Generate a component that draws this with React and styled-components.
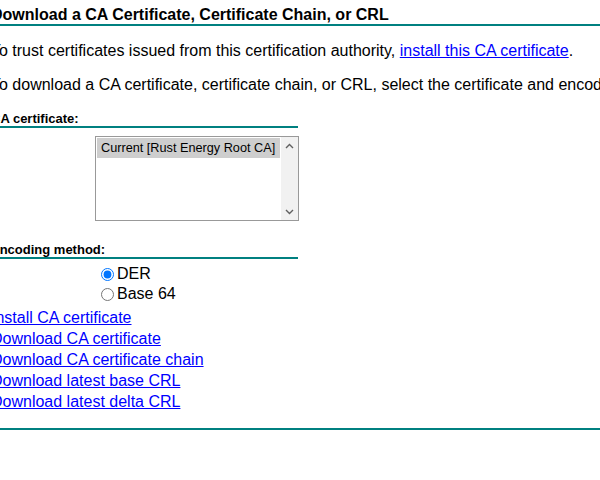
import React from "react";
import styled, { createGlobalStyle } from "styled-components";

const GlobalStyle = createGlobalStyle`
  html, body {
    margin: 0;
    padding: 0;
    background: #ffffff;
    overflow: hidden;
  }
  body {
    font-family: "Liberation Sans", Arial, sans-serif;
    color: #000000;
  }
`;

const Page = styled.div`
  margin-left: -9px;
  width: 820px;
  padding-top: 6px;
`;

const Title = styled.div`
  font-size: 16px;
  font-weight: bold;
  line-height: 18px;
`;

const Rule = styled.div`
  height: 2px;
  background: #008080;
  margin-top: ${(p) => p.$top || 0}px;
`;

const Para = styled.p`
  margin: 16px 0 0;
  font-size: 16px;
  line-height: 18px;
  white-space: nowrap;
`;

const Link = styled.a`
  color: #0000ff;
  text-decoration: underline;
  cursor: pointer;
`;

const FormBlock = styled.div`
  width: 307px;
  margin-top: 18px;
`;

const Label = styled.div`
  font-size: 13px;
  font-weight: bold;
  line-height: 14px;
  margin-top: ${(p) => p.$top || 0}px;
`;

const Field = styled.div`
  padding-left: 104px;
  margin-top: ${(p) => p.$top || 0}px;
`;

const Listbox = styled.div`
  box-sizing: border-box;
  width: 204px;
  height: 85px;
  border: 1px solid #999999;
  display: flex;
  background: #ffffff;
`;

const OptionList = styled.div`
  flex: 1;
  padding: 1px;
`;

const Option = styled.div`
  height: 20px;
  line-height: 20px;
  padding-left: 4px;
  font-size: 12.7px;
  white-space: nowrap;
  background: ${(p) => (p.$selected ? "#cecece" : "transparent")};
`;

const Scrollbar = styled.div`
  width: 17px;
  background: #f1f1f1;
  display: flex;
  flex-direction: column;
  justify-content: space-between;
`;

const ScrollButton = styled.div`
  height: 17px;
  display: flex;
  align-items: center;
  justify-content: center;
`;

const RadioRow = styled.label`
  display: flex;
  align-items: center;
  height: 20px;
  font-size: 16px;
  line-height: 18px;
`;

const Radio = styled.input`
  width: 13px;
  height: 13px;
  margin: 0 3px 0 6px;
`;

const LinkList = styled.div`
  margin-top: 3px;
`;

const LinkRow = styled.div`
  font-size: 16px;
  line-height: 21px;
  white-space: nowrap;
`;

const Chevron = ({ up }) => (
  <svg width="9" height="6" viewBox="0 0 9 6">
    <polyline
      points={up ? "1,5 4.5,1.5 8,5" : "1,1 4.5,4.5 8,1"}
      fill="none"
      stroke="#606060"
      strokeWidth="1.4"
    />
  </svg>
);

const links = [
  "Install CA certificate",
  "Download CA certificate",
  "Download CA certificate chain",
  "Download latest base CRL",
  "Download latest delta CRL",
];

export default function App() {
  return (
    <>
      <GlobalStyle />
      <Page>
        <Title>Download a CA Certificate, Certificate Chain, or CRL</Title>
        <Rule />
        <Para>
          To trust certificates issued from this certification authority,{" "}
          <Link>install this CA certificate</Link>.
        </Para>
        <Para>
          To download a CA certificate, certificate chain, or CRL, select the
          certificate and encoding method.
        </Para>

        <FormBlock>
          <Label>CA certificate:</Label>
          <Rule />
          <Field $top={8}>
            <Listbox>
              <OptionList>
                <Option $selected>Current [Rust Energy Root CA]</Option>
              </OptionList>
              <Scrollbar>
                <ScrollButton>
                  <Chevron up />
                </ScrollButton>
                <ScrollButton>
                  <Chevron />
                </ScrollButton>
              </Scrollbar>
            </Listbox>
          </Field>

          <Label $top={22}>Encoding method:</Label>
          <Rule />
          <Field $top={5}>
            <RadioRow>
              <Radio type="radio" name="enc" defaultChecked />
              DER
            </RadioRow>
            <RadioRow>
              <Radio type="radio" name="enc" />
              Base 64
            </RadioRow>
          </Field>
        </FormBlock>

        <LinkList>
          {links.map((t) => (
            <LinkRow key={t}>
              <Link>{t}</Link>
            </LinkRow>
          ))}
        </LinkList>
        <Rule $top={16} />
      </Page>
    </>
  );
}
